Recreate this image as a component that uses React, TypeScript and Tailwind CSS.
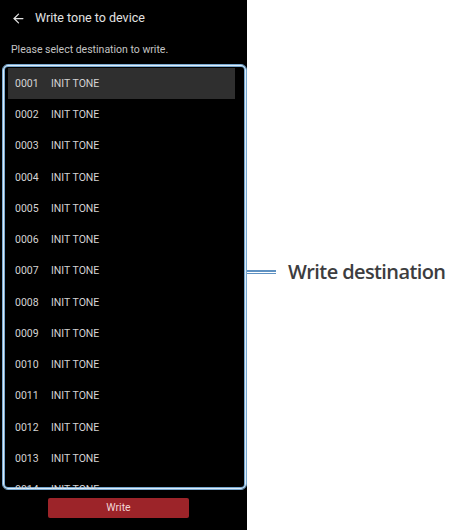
import React from 'react';
import { ArrowLeft } from 'lucide-react';

const rows = Array.from({ length: 14 }, (_, i) => String(i + 1).padStart(4, '0'));

const App: React.FC = () => {
  return (
    <div className="flex w-[450px] h-[530px] bg-white overflow-hidden">
      {/* Phone screen */}
      <div
        className="w-[247px] h-full bg-black flex flex-col shrink-0"
        style={{ fontFamily: 'Roboto, "Noto Sans", sans-serif' }}
      >
        {/* Header */}
        <div className="h-[36px] flex items-center pl-[11px] gap-[9px] text-[#e2e2e2]">
          <ArrowLeft className="w-[15px] h-[15px]" strokeWidth={2} />
          <span className="text-[12.5px]">Write tone to device</span>
        </div>
        <div className="h-[28px] flex items-center pl-[11px] text-[10.5px] text-[#c4c4c4]">
          Please select destination to write.
        </div>

        {/* Destination list */}
        <div className="ml-[2px] h-[426px] shrink-0 rounded-[6px] border border-[#78a8d0] shadow-[inset_0_0_0_1px_#dcebf7,inset_0_0_0_2px_#78a8d0] overflow-hidden pt-[3px]">
          {rows.map((n, i) => (
            <div
              key={n}
              className={`h-[31.25px] ml-[5px] mr-[11px] flex items-center pl-[7px] text-[10.5px] text-[#d4d4d4] ${
                i === 0 ? 'bg-[#2f2f2f]' : ''
              }`}
            >
              <span className="w-[36px]">{n}</span>
              <span>INIT TONE</span>
            </div>
          ))}
        </div>

        {/* Write button */}
        <div className="flex justify-center pt-[8px] pl-[1px] pr-[11px]">
          <button className="w-[141px] h-[20px] rounded-[2px] bg-[#9c2429] text-[10.5px] text-[#f2d6d6]">
            Write
          </button>
        </div>
      </div>

      {/* Annotation */}
      <div className="flex-1 flex items-center pt-[14px]">
        <div className="flex flex-col gap-[1px] w-[29px]">
          <div className="h-[1.5px] bg-[#5f92c2]" />
          <div className="h-[1.5px] bg-[#5f92c2]" />
        </div>
        <span
          className="ml-[12px] text-[20px] font-semibold text-[#3d3d3f] tracking-[-0.6px] whitespace-nowrap"
          style={{ fontFamily: '"Open Sans", "Noto Sans", sans-serif' }}
        >
          Write destination
        </span>
      </div>
    </div>
  );
};

export default App;
